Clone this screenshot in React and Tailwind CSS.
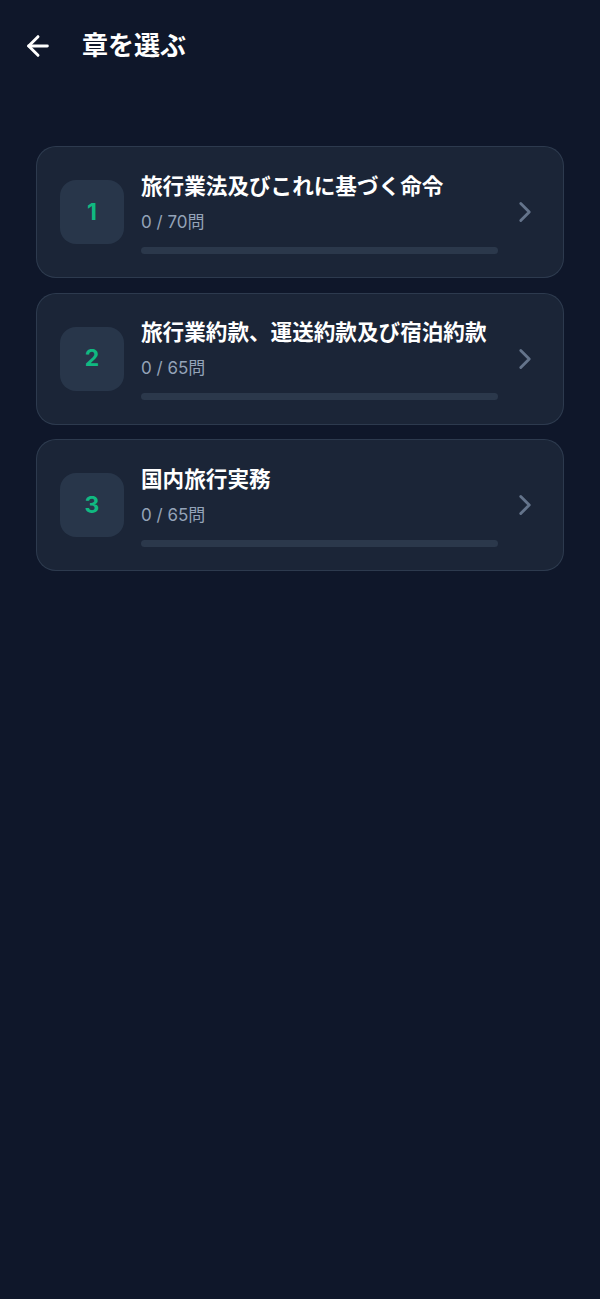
import React from "react";
import { ArrowLeft, ChevronRight } from "lucide-react";

const chapters = [
  { n: 1, title: "旅行業法及びこれに基づく命令", done: 0, total: 70 },
  { n: 2, title: "旅行業約款、運送約款及び宿泊約款", done: 0, total: 65 },
  { n: 3, title: "国内旅行実務", done: 0, total: 65 },
];

const font = { fontFamily: '"Inter", "Noto Sans CJK JP", sans-serif' };

export default function App() {
  return (
    <div className="min-h-[1299px] w-full bg-[#0f172a] text-white" style={font}>
      <div className="flex h-[92px] items-center pl-[22px]">
        <button className="flex h-[32px] w-[32px] items-center justify-center text-white">
          <ArrowLeft size={32} strokeWidth={2.2} />
        </button>
        <h1 className="ml-[28px] text-[26px] font-bold leading-none">章を選ぶ</h1>
      </div>
      <div className="mt-[54px] flex flex-col gap-[14.5px] px-[36px]">
        {chapters.map((c) => (
          <div
            key={c.n}
            className="flex h-[132px] items-center rounded-[20px] border border-[#334155]/80 bg-[#1e293b]/80 pl-[23px] pr-[21px]"
          >
            <div className="flex h-[64px] w-[64px] shrink-0 items-center justify-center rounded-[16px] bg-[#28364a]">
              <span className="text-[23px] font-bold text-[#10b981]">{c.n}</span>
            </div>
            <div className="ml-[17px] flex min-w-0 flex-1 flex-col">
              <div className="text-[21.6px] font-bold leading-[30px] text-white">{c.title}</div>
              <div className="mt-[9px] text-[17px] leading-[24px] text-[#94a3b8]">
                {c.done} / {c.total}問
              </div>
              <div className="mt-[13px] h-[7px] w-full rounded-full bg-[#2b384b]">
                <div className="h-full rounded-full bg-[#10b981]" style={{ width: `${(c.done / c.total) * 100}%` }} />
              </div>
            </div>
            <div className="ml-[10px] flex w-[34px] shrink-0 items-center justify-center text-[#64748b]">
              <ChevronRight size={34} strokeWidth={2} />
            </div>
          </div>
        ))}
      </div>
    </div>
  );
}
